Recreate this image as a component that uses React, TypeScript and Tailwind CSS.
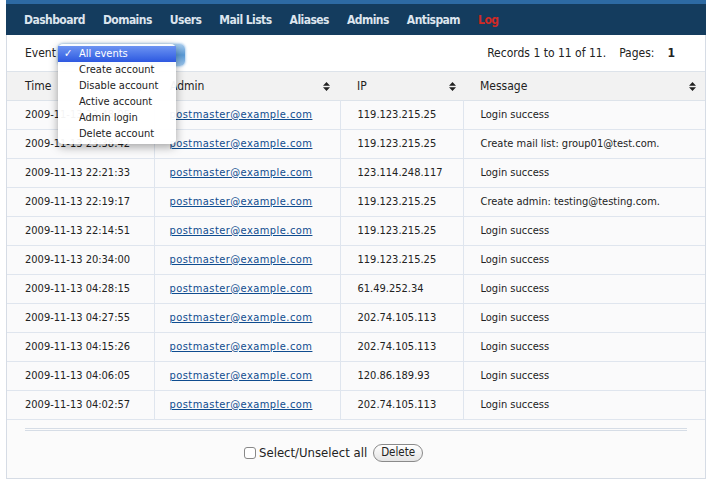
import React from "react";

const rows = [
  { time: "2009-11-13 23:48:05", admin: "postmaster@example.com", ip: "119.123.215.25", msg: "Login success" },
  { time: "2009-11-13 23:38:42", admin: "postmaster@example.com", ip: "119.123.215.25", msg: "Create mail list: group01@test.com." },
  { time: "2009-11-13 22:21:33", admin: "postmaster@example.com", ip: "123.114.248.117", msg: "Login success" },
  { time: "2009-11-13 22:19:17", admin: "postmaster@example.com", ip: "119.123.215.25", msg: "Create admin: testing@testing.com." },
  { time: "2009-11-13 22:14:51", admin: "postmaster@example.com", ip: "119.123.215.25", msg: "Login success" },
  { time: "2009-11-13 20:34:00", admin: "postmaster@example.com", ip: "119.123.215.25", msg: "Login success" },
  { time: "2009-11-13 04:28:15", admin: "postmaster@example.com", ip: "61.49.252.34", msg: "Login success" },
  { time: "2009-11-13 04:27:55", admin: "postmaster@example.com", ip: "202.74.105.113", msg: "Login success" },
  { time: "2009-11-13 04:15:26", admin: "postmaster@example.com", ip: "202.74.105.113", msg: "Login success" },
  { time: "2009-11-13 04:06:05", admin: "postmaster@example.com", ip: "120.86.189.93", msg: "Login success" },
  { time: "2009-11-13 04:02:57", admin: "postmaster@example.com", ip: "202.74.105.113", msg: "Login success" },
];

const nav = ["Dashboard", "Domains", "Users", "Mail Lists", "Aliases", "Admins", "Antispam"];

const events = ["Create account", "Disable account", "Active account", "Admin login", "Delete account"];

const SortIcon = () => (
  <svg width="7" height="9" viewBox="0 0 7 9" className="shrink-0">
    <path d="M0 3.8 L3.5 0 L7 3.8 Z M0 5.2 L3.5 9 L7 5.2 Z" fill="#222" />
  </svg>
);

export default function App() {
  return (
    <div className="min-h-screen bg-white font-[DejaVu_Sans_Condensed,DejaVu_Sans,sans-serif] text-[#222]">
      <div className="ml-[6px] w-[700px]">
        {/* Top navigation */}
        <div className="h-[4px] bg-[#2d6aa3]" />
        <div className="flex h-[31px] items-center bg-[#143c5e] pl-[9px]">
          {nav.map((item) => (
            <span key={item} className="px-[9px] text-[12px] font-bold tracking-[-0.55px] text-[#dde5ee]">
              {item}
            </span>
          ))}
          <span className="px-[9px] text-[12px] font-bold tracking-[-0.55px] text-[#d02a25]">Log</span>
        </div>

        <div className="border-x border-b border-[#d6dce5]">
          {/* Filter row */}
          <div className="relative flex h-[36px] items-center justify-between bg-white pl-[18px] pr-[30px] text-[12px]">
            <span>Event</span>
            <div className="flex items-center gap-[13px]">
              <span>Records 1 to 11 of 11.</span>
              <span>Pages:</span>
              <span className="font-bold">1</span>
            </div>

            {/* aqua select under the open menu */}
            <div className="absolute left-[51px] top-[9px] h-[22px] w-[127px] rounded-[5px] bg-gradient-to-b from-[#a9cdee] via-[#5a9ad6] to-[#9cc6ec] shadow-[0_0_3px_#6aa6e0]" />

            {/* open popup menu */}
            <div className="absolute left-[51px] top-[9px] z-10 w-[118px] rounded-[5px] bg-white/95 py-[2px] text-[11px] shadow-[0_3px_10px_rgba(0,0,0,0.35)]">
              <div className="flex h-[16px] items-center bg-gradient-to-b from-[#6d93f2] to-[#2d57e0] text-white">
                <span className="w-[21px] pl-[6px]">✓</span>
                <span>All events</span>
              </div>
              {events.map((e) => (
                <div key={e} className="flex h-[16px] items-center">
                  <span className="w-[21px]" />
                  <span>{e}</span>
                </div>
              ))}
            </div>
          </div>

          {/* Table */}
          <table className="w-full table-fixed border-collapse">
            <colgroup>
              <col className="w-[147px]" />
              <col className="w-[186px]" />
              <col className="w-[123px]" />
              <col />
            </colgroup>
            <thead>
              <tr className="h-[29px] border-y border-[#dde3ea] bg-[#f2f2f2] text-left text-[12px]">
                <th className="pl-[18px] pr-[10px] font-normal">
                  <div className="flex items-center justify-between">
                    <span>Time</span>
                    <SortIcon />
                  </div>
                </th>
                <th className="pl-[16px] pr-[10px] font-normal">
                  <div className="flex items-center justify-between">
                    <span>Admin</span>
                    <SortIcon />
                  </div>
                </th>
                <th className="pl-[17px] pr-[7px] font-normal">
                  <div className="flex items-center justify-between">
                    <span>IP</span>
                    <SortIcon />
                  </div>
                </th>
                <th className="pl-[17px] pr-[9px] font-normal">
                  <div className="flex items-center justify-between">
                    <span>Message</span>
                    <SortIcon />
                  </div>
                </th>
              </tr>
            </thead>
            <tbody className="text-[11px]">
              {rows.map((r, i) => (
                <tr key={i} className="h-[29px] border-b border-[#dfe5ee] bg-[#fafafb]">
                  <td className="border-r border-[#dfe5ee] pl-[18px]">{r.time}</td>
                  <td className="border-r border-[#dfe5ee] pl-[15px]">
                    <a href="#" className="tracking-[0.45px] text-[#0f4c8f] underline">
                      {r.admin}
                    </a>
                  </td>
                  <td className="border-r border-[#dfe5ee] pl-[17px]">{r.ip}</td>
                  <td className="pl-[17px]">{r.msg}</td>
                </tr>
              ))}
            </tbody>
          </table>

          {/* Footer actions */}
          <div className="bg-[#fbfbfb] px-[18px] pb-[15px] pt-[8px]">
            <div className="h-[3px] border-y border-[#d6dde6]" />
            <div className="mt-[12px] flex items-center pl-[219px] text-[13px]">
              <span className="mr-[3px] h-[12px] w-[12px] rounded-[3px] border border-[#888] bg-white" />
              <span>Select/Unselect all</span>
              <button className="ml-[6px] h-[18px] rounded-full border border-[#8a8a8a] bg-gradient-to-b from-white to-[#e4e4e4] px-[7px] text-[11.5px] leading-none">
                Delete
              </button>
            </div>
          </div>
        </div>
      </div>
    </div>
  );
}
